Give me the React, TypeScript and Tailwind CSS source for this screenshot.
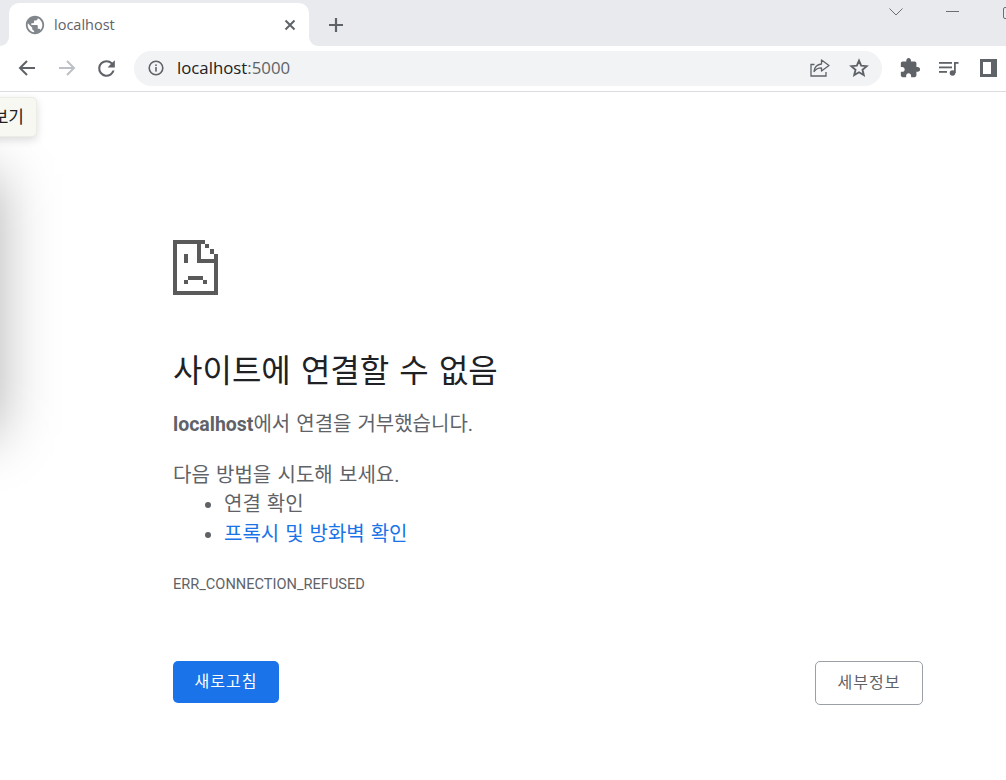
import React from "react";

const FONT = "font-['Open_Sans','Noto_Sans_CJK_KR',sans-serif]";
const BODY = "font-['Roboto','Noto_Sans_CJK_KR',sans-serif]";

function SadPage() {
  return (
    <svg width="45" height="55" viewBox="0 0 45 55" fill="#5a5a5a" shapeRendering="crispEdges" className="block">
      <rect x="0" y="0" width="32" height="4" />
      <rect x="0" y="0" width="4" height="55" />
      <rect x="0" y="51" width="45" height="4" />
      <rect x="41" y="14" width="4" height="41" />
      <rect x="24" y="0" width="4" height="23" />
      <rect x="24" y="19" width="21" height="4" />
      <rect x="32" y="4" width="4" height="4" />
      <rect x="37" y="9" width="4" height="5" />
      <rect x="11" y="14" width="4" height="9" />
      <rect x="11" y="40" width="4" height="4" />
      <rect x="15" y="36" width="15" height="4" />
      <rect x="30" y="40" width="4" height="4" />
    </svg>
  );
}

export default function App() {
  return (
    <div className={`relative w-[1006px] h-[780px] overflow-hidden bg-white ${FONT}`}>
      {/* tab strip */}
      <div className="flex h-[46px] items-end bg-[#e8eaed] pl-[9px]">
        <div className="relative flex h-[43px] w-[300px] shrink-0 items-center rounded-t-[10px] bg-white pl-[15px] pr-[12px]">
          <div className="absolute bottom-0 left-[-9px] h-[9px] w-[9px] bg-white">
            <div className="h-full w-full rounded-br-[9px] bg-[#e8eaed]" />
          </div>
          <div className="absolute bottom-0 right-[-9px] h-[9px] w-[9px] bg-white">
            <div className="h-full w-full rounded-bl-[9px] bg-[#e8eaed]" />
          </div>
          <svg width="22" height="22" viewBox="0 0 24 24" fill="#80868b" className="shrink-0">
            <path d="M12 2C6.48 2 2 6.48 2 12s4.48 10 10 10 10-4.48 10-10S17.52 2 12 2zm-1 17.93c-3.95-.49-7-3.85-7-7.93 0-.62.08-1.21.21-1.79L9 15v1c0 1.1.9 2 2 2v1.93zm6.9-2.54c-.26-.81-1-1.39-1.9-1.39h-1v-3c0-.55-.45-1-1-1H8v-2h2c.55 0 1-.45 1-1V7h2c1.1 0 2-.9 2-2v-.41c2.93 1.19 5 4.06 5 7.41 0 2.08-.8 3.97-2.1 5.39z" />
          </svg>
          <span className="ml-[8px] text-[14.5px] text-[#5f6368]">localhost</span>
          <svg width="14" height="14" viewBox="0 0 14 14" stroke="#5f6368" strokeWidth="2" className="ml-auto shrink-0">
            <path d="M2.5 2.5l9 9M11.500 2.5l-9 9" />
          </svg>
        </div>
        <div className="ml-[18px] flex h-[43px] items-center">
          <svg width="18" height="18" viewBox="0 0 18 18" stroke="#5f6368" strokeWidth="2.2">
            <path d="M9 2v14M2 9h14" />
          </svg>
        </div>
        <div className="ml-auto mr-[-12px] flex h-full shrink-0 items-start">
          <svg width="14" height="8" viewBox="0 0 14 8" fill="none" stroke="#6b6f75" strokeWidth="1" className="mt-[8px]">
            <path d="M0.5 0.5L7 7L13.5 0.5" />
          </svg>
          <div className="ml-[43px] mt-[11px] h-px w-[13px] bg-[#6b6f75]" />
          <div className="ml-[44px] mt-[7px] h-[12px] w-[15px] rounded-[2px] border border-[#6b6f75]" />
        </div>
      </div>

      {/* toolbar */}
      <div className="flex h-[46px] items-center border-b border-[#dadce0] bg-white pb-[1px] pl-[17px]">
        <svg width="20" height="20" viewBox="0 0 20 20" fill="none" stroke="#5f6368" strokeWidth="2" className="shrink-0">
          <path d="M18 10H3M10 3l-7 7 7 7" />
        </svg>
        <svg width="20" height="20" viewBox="0 0 20 20" fill="none" stroke="#bdc1c6" strokeWidth="2" className="ml-[20px] shrink-0">
          <path d="M2 10h15M10 3l7 7-7 7" />
        </svg>
        <svg width="25" height="25" viewBox="0 0 24 24" fill="#5f6368" className="ml-[17px] shrink-0">
          <path d="M17.65 6.35A7.96 7.96 0 0 0 12 4a8 8 0 1 0 7.74 10h-2.08A6 6 0 1 1 12 6c1.66 0 3.14.69 4.22 1.78L13 11h7V4l-2.35 2.35z" />
        </svg>
        <div className="ml-[15px] flex h-[35px] w-[748px] shrink-0 items-center rounded-full bg-[#f1f3f4] pl-[14px] pr-[13px]">
          <svg width="16" height="16" viewBox="0 0 16 16" fill="none" className="shrink-0">
            <circle cx="8" cy="8" r="6.8" stroke="#5f6368" strokeWidth="1.6" />
            <rect x="7.2" y="7" width="1.6" height="4.6" fill="#5f6368" />
            <rect x="7.2" y="4.4" width="1.6" height="1.6" fill="#5f6368" />
          </svg>
          <span className="ml-[13px] text-[16.8px] text-[#202124]">
            localhost<span className="text-[#5f6368]">:5000</span>
          </span>
          <svg width="22" height="20" viewBox="0 0 22 20" fill="none" stroke="#5f6368" strokeWidth="1.3" className="ml-auto shrink-0">
            <path d="M5.5 6.5H2v11.5h15v-4" />
            <path d="M12.5 2l7.5 5.5-7.5 5.5v-3.2c-3.2 0-5.5 1-7.5 3.7.4-4.2 3-7 7.5-7.500z" strokeLinejoin="round" />
          </svg>
          <svg width="20" height="20" viewBox="0 0 24 24" fill="none" stroke="#5f6368" strokeWidth="2.3" strokeLinejoin="miter" className="ml-[18px] shrink-0">
            <path d="M12 3.2l2.6 6 6.500.6-4.900 4.300 1.500 6.400-5.700-3.400-5.700 3.400 1.500-6.400-4.900-4.300 6.500-.6z" />
          </svg>
        </div>
        <svg width="22" height="22" viewBox="0 0 24 24" fill="#5f6368" className="ml-[17px] shrink-0">
          <path d="M20.5 11H19V7c0-1.100-.9-2-2-2h-4V3.500C13 2.120 11.880 1 10.500 1S8 2.120 8 3.500V5H4c-1.100 0-1.990.9-1.990 2v3.800H3.500c1.490 0 2.700 1.210 2.700 2.700s-1.210 2.700-2.700 2.700H2V20c0 1.100.9 2 2 2h3.800v-1.500c0-1.490 1.210-2.700 2.700-2.700 1.490 0 2.700 1.210 2.700 2.700V22H17c1.100 0 2-.9 2-2v-4h1.500c1.380 0 2.500-1.120 2.500-2.500S21.880 11 20.500 11z" />
        </svg>
        <svg width="20" height="18" viewBox="0 0 20 18" fill="#5f6368" className="ml-[18px] shrink-0">
          <rect x="0" y="3" width="13" height="1.800" />
          <rect x="0" y="7.500" width="13" height="1.800" />
          <rect x="0" y="12" width="8" height="1.800" />
          <circle cx="13.500" cy="14" r="2.800" />
          <rect x="15" y="3" width="1.800" height="11" />
          <rect x="15" y="3" width="4.500" height="1.800" />
        </svg>
        <div className="ml-[21px] flex h-[18px] w-[17px] shrink-0 bg-[#5f6368]">
          <div className="ml-[3px] mt-[3px] h-[12px] w-[8px] bg-white" />
        </div>
      </div>

      {/* page body */}
      <main className={`pl-[173px] pr-[83px] pt-[148px] ${BODY}`}>
        <SadPage />
        <h1 className="mt-[56px] text-[32px] font-normal leading-[40px] text-[#202124] [word-spacing:2.2px]">사이트에 연결할 수 없음</h1>
        <p className="mt-[20px] text-[20px] leading-[26px] text-[#5f6368] [word-spacing:1px]">
          <strong className="text-[19.5px] font-bold">localhost</strong>에서 연결을 거부했습니다.
        </p>
        <p className="mt-[24px] text-[20px] leading-[26px] text-[#5f6368] [word-spacing:1.3px]">다음 방법을 시도해 보세요.</p>
        <ul className="mt-[1px] list-disc pl-[51px] text-[20px] leading-[30px] text-[#5f6368] [word-spacing:1px]">
          <li>연결 확인</li>
          <li>
            <a className="text-[#1a73e8]">프록시 및 방화벽 확인</a>
          </li>
        </ul>
        <div className="mt-[25px] text-[14.6px] leading-[20px] text-[#5f6368]">ERR_CONNECTION_REFUSED</div>
        <div className="mt-[67px] flex items-start justify-between">
          <button className="h-[42px] w-[106px] rounded-[5px] bg-[#1a73e8] text-[16px] font-normal tracking-[1px] text-white">새로고침</button>
          <button className="h-[44px] w-[108px] rounded-[5px] border border-[#9aa0a6] bg-white text-[16px] font-normal tracking-[1px] text-[#5f6368]">세부정보</button>
        </div>
      </main>

      {/* left-edge shadow of a hidden panel */}
      <div className="pointer-events-none absolute left-[-70px] top-[175px] h-[260px] w-[70px] bg-black/30 blur-[28px]" />

      {/* tooltip */}
      <div className="absolute left-[-40px] top-[97px] flex h-[40px] w-[77px] items-center justify-end rounded-[5px] border border-[#ececE6] bg-[#f8f8f3] pr-[12px] text-[17px] text-[#202124] shadow-[0_3px_8px_rgba(0,0,0,0.14)]">
        보기
      </div>
    </div>
  );
}
